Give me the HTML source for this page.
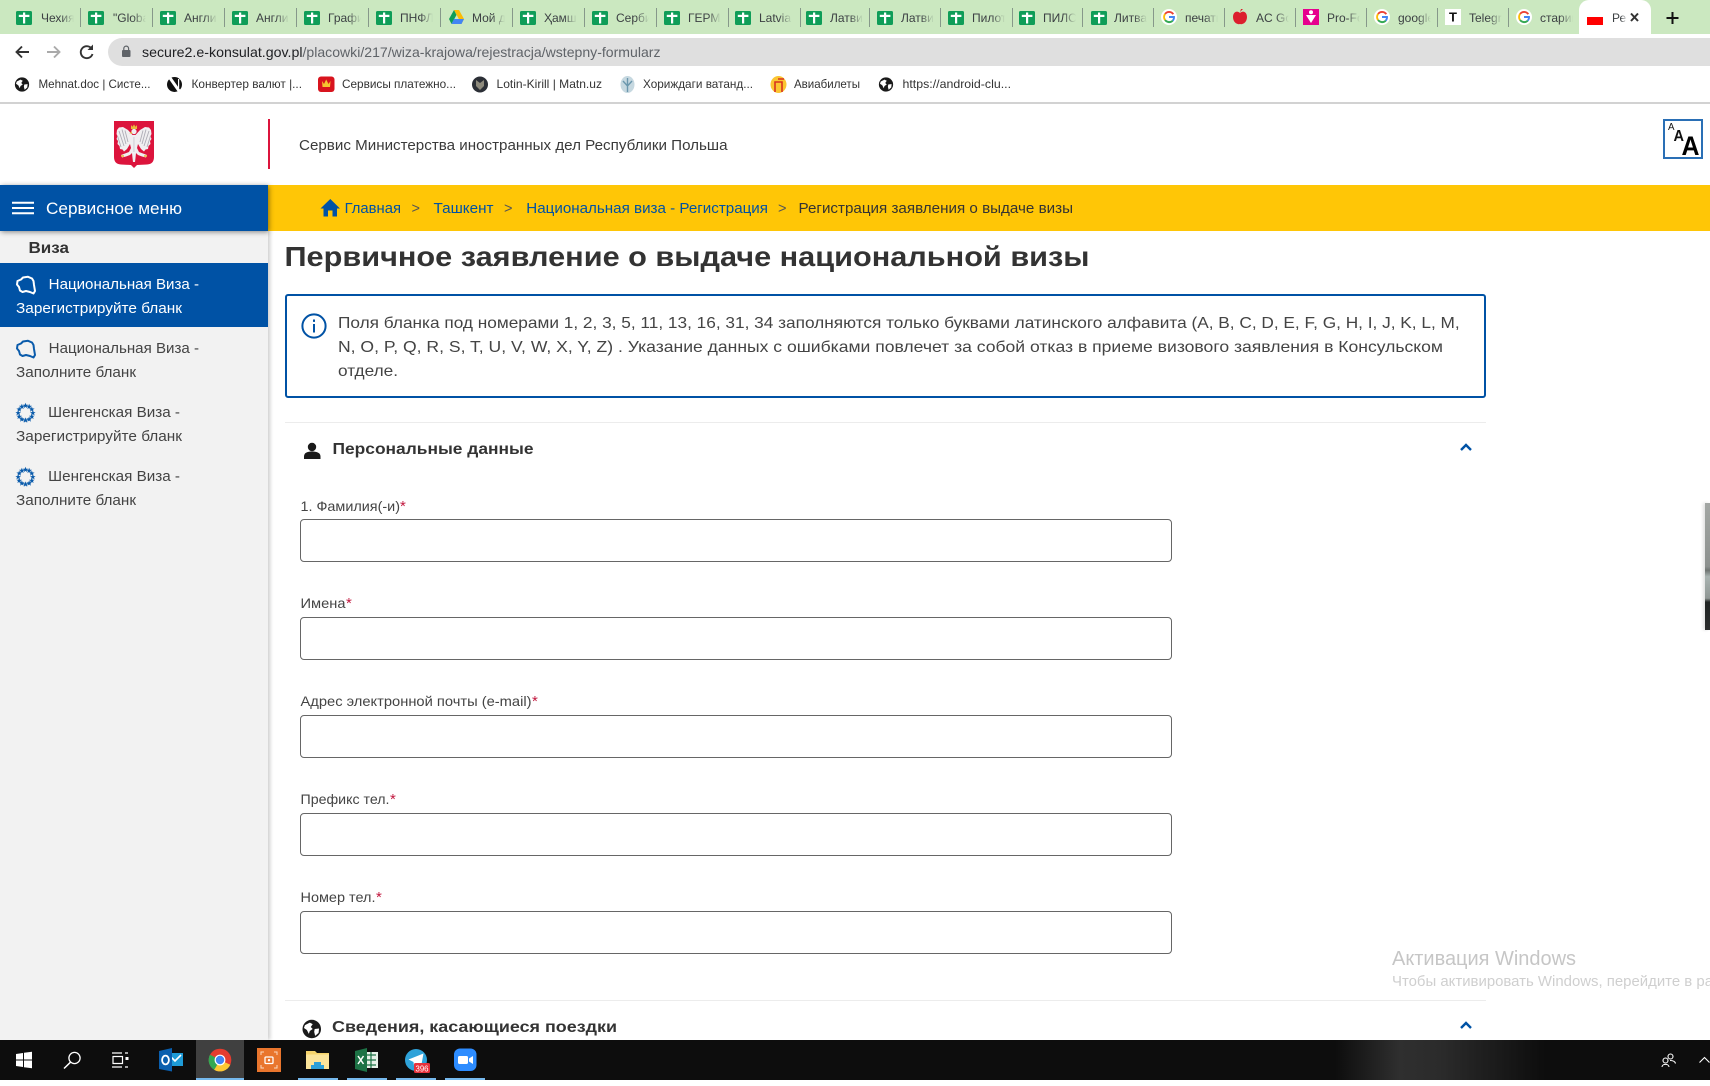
<!DOCTYPE html>
<html lang="ru"><head><meta charset="utf-8"><title>Регистрация заявления</title>
<style>
html,body{margin:0;padding:0;background:#fff}
body{position:relative;width:1710px;height:1086px;overflow:hidden;font-family:"Liberation Sans","Noto Sans CJK SC",sans-serif}
.b{position:absolute}
.tt{position:absolute;top:10px;height:16px;line-height:16px;width:33px;font-size:12px;color:#3c4043;white-space:nowrap;overflow:hidden;-webkit-mask-image:linear-gradient(to right,#000 60%,transparent);mask-image:linear-gradient(to right,#000 60%,transparent)}
.sp{position:absolute;top:8px;width:1px;height:19px;background:#86988a}
input{position:absolute;left:300px;width:872px;height:43px;box-sizing:border-box;border:1px solid #666;border-radius:4px;background:#fff;padding:0;margin:0;outline:0}
svg{position:absolute;left:0;top:0}
svg text{font-family:"Liberation Sans","Noto Sans CJK SC",sans-serif}
</style></head><body>

<div class="b" style="left:0;top:0;width:1710px;height:34px;background:#cbe8c0"></div>
<div class="b" style="left:1579px;top:0;width:72px;height:38px;background:#fff;border-radius:10px 10px 0 0"></div>
<div class="b" style="left:108px;top:38px;width:1602px;height:28px;background:#dfdfdf;border-radius:14px 0 0 14px"></div>
<div class="b" style="left:0;top:102px;width:1710px;height:2px;background:#d2d2d2"></div>

<!-- tab seps -->
<div class="sp" style="left:80px"></div><div class="sp" style="left:152px"></div><div class="sp" style="left:224px"></div><div class="sp" style="left:296px"></div><div class="sp" style="left:368px"></div><div class="sp" style="left:440px"></div><div class="sp" style="left:512px"></div><div class="sp" style="left:584px"></div><div class="sp" style="left:656px"></div><div class="sp" style="left:728px"></div><div class="sp" style="left:800px"></div><div class="sp" style="left:869px"></div><div class="sp" style="left:940px"></div><div class="sp" style="left:1012px"></div><div class="sp" style="left:1082px"></div><div class="sp" style="left:1153px"></div><div class="sp" style="left:1224px"></div><div class="sp" style="left:1295px"></div><div class="sp" style="left:1366px"></div><div class="sp" style="left:1437px"></div><div class="sp" style="left:1508px"></div>

<!-- tab titles -->
<div class="tt" style="left:41px">Чехия</div>
<div class="tt" style="left:113px">"Global</div>
<div class="tt" style="left:184px">Англия</div>
<div class="tt" style="left:256px">Англия</div>
<div class="tt" style="left:328px">График</div>
<div class="tt" style="left:400px">ПНФЛ</div>
<div class="tt" style="left:472px">Мой диск</div>
<div class="tt" style="left:544px">Ҳамша</div>
<div class="tt" style="left:616px">Сербия</div>
<div class="tt" style="left:688px">ГЕРМА</div>
<div class="tt" style="left:759px">Latvia</div>
<div class="tt" style="left:830px">Латвия</div>
<div class="tt" style="left:901px">Латвия</div>
<div class="tt" style="left:972px">Пилот</div>
<div class="tt" style="left:1043px">ПИЛС</div>
<div class="tt" style="left:1114px">Литва</div>
<div class="tt" style="left:1185px">печать</div>
<div class="tt" style="left:1256px">AC Go</div>
<div class="tt" style="left:1327px">Pro-Fo</div>
<div class="tt" style="left:1398px">google</div>
<div class="tt" style="left:1469px">Telegra</div>
<div class="tt" style="left:1540px">старин</div>
<div class="tt" style="left:1612px;width:15px">Рег</div>

<!-- sidebar / bars -->
<div class="b" style="left:0;top:231px;width:268px;height:809px;background:#f2f2f2;box-shadow:2px 0 4px rgba(0,0,0,.2)"></div>
<div class="b" style="left:268px;top:185px;width:1442px;height:46px;background:#ffc606"></div>
<div class="b" style="left:0;top:185px;width:268px;height:46px;background:#0052a5;box-shadow:1px 1px 5px rgba(0,0,0,.45)"></div>
<div class="b" style="left:0;top:263px;width:268px;height:64px;background:#0052a5"></div>
<div class="b" style="left:268px;top:119px;width:2px;height:50px;background:#dc143c"></div>

<!-- info box -->
<div class="b" style="left:284.5px;top:294px;width:1201.5px;height:104px;box-sizing:border-box;border:2px solid #0052a5;border-radius:3px"></div>
<div class="b" style="left:285px;top:422px;width:1201px;height:1px;background:#ececec"></div>
<div class="b" style="left:285px;top:1000px;width:1201px;height:1px;background:#ececec"></div>

<input style="top:519px" aria-label="Фамилия"><input style="top:617px" aria-label="Имена"><input style="top:715px" aria-label="Email"><input style="top:813px" aria-label="Префикс"><input style="top:911px" aria-label="Номер">

<!-- scrollbar sliver -->
<div class="b" style="left:1705px;top:503px;width:5px;height:127px;background:linear-gradient(#a3a7a4 0,#8c908e 50%,#6f7472 53%,#a9b3b1 58%,#8f9694 75%,#1f2322 78%,#2a2c2c 100%);box-shadow:-2px 0 3px rgba(0,0,0,.12)"></div>

<!-- taskbar -->
<div class="b" style="left:0;top:1040px;width:1710px;height:40px;background:linear-gradient(to right,#0d0d0d 0,#0d0d0d 1335px,#2f2f2f 1400px,#2b2b2b 1440px,#0d0d0d 1545px,#0d0d0d 100%)"></div>
<div class="b" style="left:196px;top:1040px;width:48px;height:40px;background:#404040"></div>
<div class="b" style="left:196px;top:1078px;width:48px;height:2px;background:#76b9ed"></div>
<div class="b" style="left:298px;top:1078px;width:40px;height:2px;background:#76b9ed"></div>
<div class="b" style="left:347px;top:1078px;width:40px;height:2px;background:#76b9ed"></div>
<div class="b" style="left:396px;top:1078px;width:40px;height:2px;background:#76b9ed"></div>
<div class="b" style="left:445px;top:1078px;width:40px;height:2px;background:#76b9ed"></div>

<svg width="1710" height="1086" viewBox="0 0 1710 1086" xmlns="http://www.w3.org/2000/svg">
<defs>
<symbol id="sheet" viewBox="0 0 16 14" overflow="visible"><rect width="16" height="14" rx="1.5" fill="#0f9d58"/><rect x="7" y="1.5" width="2.2" height="11" fill="#fff"/><rect x="2.8" y="3.8" width="10.6" height="2.2" fill="#fff"/></symbol>
<symbol id="goog" viewBox="0 0 16 16" overflow="visible"><circle cx="8" cy="8" r="8" fill="#fff"/><path d="M12.3 5.2A5 5 0 0 0 4.1 4.9" fill="none" stroke="#ea4335" stroke-width="1.9"/><path d="M4.1 4.9A5 5 0 0 0 4.1 11" fill="none" stroke="#fbbc05" stroke-width="1.9"/><path d="M4.1 11A5 5 0 0 0 11.8 11.6" fill="none" stroke="#34a853" stroke-width="1.9"/><path d="M11.8 11.6A5 5 0 0 0 13 8H8" fill="none" stroke="#4285f4" stroke-width="1.9"/></symbol>
<symbol id="globe" viewBox="0 0 20 20" overflow="visible"><circle cx="10" cy="10" r="9.5" fill="#1a1a1a"/><path d="M3 6 L8 3.5 L11 5 L9 8 L11 10 L8 12 L7 15 L5 11 L2 9Z M13 10 L17.5 9.5 L17 14 L13.5 17 L12.5 13Z" fill="#fff"/></symbol>
<symbol id="pol" viewBox="0 0 20 19" overflow="visible"><path d="M1.5 5 L5 3.5 L7 1.5 L12 .8 L16 2.5 L17.5 5 L18 9 L18.5 12 L19 15 L17.5 17.5 L14 16 L10 15 L6.5 16 L4 14.5 L3 11 L1 8.5Z" fill="none" stroke="currentColor" stroke-width="2" stroke-linejoin="round"/></symbol>
<polygon id="s" points="0,-2.9 .8,-.9 2.8,-.9 1.2,.4 1.8,2.4 0,1.2 -1.8,2.4 -1.2,.4 -2.8,-.9 -.8,-.9" fill="#0a5bab"/>
<g id="eu"><use href="#s" transform="translate(0,-7.3)"/><use href="#s" transform="translate(3.65,-6.3)"/><use href="#s" transform="translate(6.3,-3.65)"/><use href="#s" transform="translate(7.3,0)"/><use href="#s" transform="translate(6.3,3.65)"/><use href="#s" transform="translate(3.65,6.3)"/><use href="#s" transform="translate(0,7.3)"/><use href="#s" transform="translate(-3.65,6.3)"/><use href="#s" transform="translate(-6.3,3.65)"/><use href="#s" transform="translate(-7.3,0)"/><use href="#s" transform="translate(-6.3,-3.65)"/><use href="#s" transform="translate(-3.65,-6.3)"/></g>
<g id="halfeagle"><path d="M132.5 135 L128 130 L123 127 L119 127.5 L117 130 L116.5 134 L117.5 136 L116.5 139 L118 141 L117.5 144 L119.5 146 L120 149 L122.5 149.5 L124 151.5 L127 149 L130 144 L131 148 L129 152 L125 153.5 L121 155 L122 157.5 L126 156.5 L130 155 L132 153 L132.5 158 L133 162 L134 162 L134 135Z" fill="#f0eff1"/><path d="M119 131 L124 146 M122 129.5 L126 144 M125 130.5 L128 142 M117.5 136 L121 147" stroke="#aeadb6" stroke-width=".9" fill="none"/><path d="M134 137 V152" stroke="#c9c8d0" stroke-width=".8"/></g>
</defs>

<!-- tab icons -->
<use href="#sheet" x="16" y="11" width="16" height="14"/><use href="#sheet" x="88" y="11" width="16" height="14"/><use href="#sheet" x="160" y="11" width="16" height="14"/><use href="#sheet" x="232" y="11" width="16" height="14"/><use href="#sheet" x="304" y="11" width="16" height="14"/><use href="#sheet" x="376" y="11" width="16" height="14"/>
<g transform="translate(449,10)"><path d="M5 0 L10 0 L15 9 L12.5 14 Z" fill="#fbbc05"/><path d="M5 0 L0 9 L2.5 14 L7.5 5Z" fill="#0f9d58"/><path d="M2.5 14 L12.5 14 L15 9 L5 9Z" fill="#4285f4"/></g>
<use href="#sheet" x="520" y="11" width="16" height="14"/><use href="#sheet" x="592" y="11" width="16" height="14"/><use href="#sheet" x="664" y="11" width="16" height="14"/><use href="#sheet" x="735" y="11" width="16" height="14"/><use href="#sheet" x="806" y="11" width="16" height="14"/><use href="#sheet" x="877" y="11" width="16" height="14"/><use href="#sheet" x="948" y="11" width="16" height="14"/><use href="#sheet" x="1019" y="11" width="16" height="14"/><use href="#sheet" x="1091" y="11" width="16" height="14"/>
<use href="#goog" x="1161" y="9" width="16" height="16"/>
<path d="M1240 13 C1237 10 1233 12 1233 17 C1233 22 1237 25 1240 24 C1243 25 1247 22 1247 17 C1247 12 1243 10 1240 13Z M1240 12 L1241 9 L1243 9" fill="#dc1f2e"/>
<rect x="1303" y="9" width="16" height="16" fill="#e6008e"/><path d="M1306 15 H1316 L1311 23Z" fill="#fff"/><circle cx="1311" cy="12.3" r="2" fill="#fff"/>
<use href="#goog" x="1374" y="9" width="16" height="16"/>
<rect x="1445" y="9" width="16" height="16" fill="#fff"/><text x="1449" y="21.5" font-size="13" font-weight="700" fill="#111">T</text>
<use href="#goog" x="1516" y="9" width="16" height="16"/>
<rect x="1587" y="17" width="16" height="8" fill="#f00"/>
<path d="M1631 13.5 L1638 21 M1638 13.5 L1631 21" stroke="#333" stroke-width="2"/>
<path d="M1672.5 12 V24 M1666.5 18 H1678.5" stroke="#111" stroke-width="2"/>

<!-- toolbar -->
<path d="M29 52 H16.5 M22 46.5 L16.5 52 L22 57.5" fill="none" stroke="#333" stroke-width="1.9"/>
<path d="M47 52 H59.5 M54 46.5 L59.5 52 L54 57.5" fill="none" stroke="#aaa" stroke-width="1.9"/>
<path d="M91.5 48.5 A6 6 0 1 0 92.5 54" fill="none" stroke="#333" stroke-width="1.9"/><path d="M87.5 50 H93 V44.5Z" fill="#333"/>
<rect x="122" y="50" width="8.5" height="7" rx="1" fill="#5f6368"/><path d="M123.8 50 V48.5 A2.4 2.4 0 0 1 128.6 48.5 V50" fill="none" stroke="#5f6368" stroke-width="1.2"/>
<text x="142" y="57" font-size="14" fill="#202124" textLength="160.5" lengthAdjust="spacingAndGlyphs">secure2.e-konsulat.gov.pl</text>
<text x="302.5" y="57" font-size="14" fill="#5f6368" textLength="358" lengthAdjust="spacingAndGlyphs">/placowki/217/wiza-krajowa/rejestracja/wstepny-formularz</text>

<!-- bookmarks -->
<use href="#globe" x="14.5" y="77" width="15" height="15"/>
<text x="38.5" y="88" font-size="12" fill="#333" textLength="112" lengthAdjust="spacingAndGlyphs">Mehnat.doc | Систе...</text>
<circle cx="174.5" cy="84.5" r="7.5" fill="#111"/><path d="M170 78 L179.5 91.5" stroke="#fff" stroke-width="3" fill="none"/><path d="M178.6 79 V88" stroke="#fff" stroke-width="1.2"/>
<text x="191.5" y="88" font-size="12" fill="#333" textLength="110.5" lengthAdjust="spacingAndGlyphs">Конвертер валют |...</text>
<rect x="318" y="76.5" width="16.5" height="15.5" rx="3" fill="#d8141e"/><path d="M322 81 L324 84 L326.2 79.5 L328.5 84 L330.5 81 L330 87 H322.5Z" fill="#f6c530"/>
<text x="342" y="88" font-size="12" fill="#333" textLength="114" lengthAdjust="spacingAndGlyphs">Сервисы платежно...</text>
<circle cx="480" cy="84.5" r="8" fill="#2b2f36"/><path d="M476 80 L480 83 L484 80 L484 86 L480 90 L476 86Z" fill="#8d8a7c"/>
<text x="496.5" y="88" font-size="12" fill="#333" textLength="105.5" lengthAdjust="spacingAndGlyphs">Lotin-Kirill | Matn.uz</text>
<ellipse cx="627.5" cy="84.5" rx="7" ry="8.5" fill="#c6d8e0"/><path d="M627.5 78 V92 M623 81 L627.5 86 L632 81" stroke="#6b97ad" stroke-width="1.4" fill="none"/>
<text x="643" y="88" font-size="12" fill="#333" textLength="110" lengthAdjust="spacingAndGlyphs">Хориждаги ватанд...</text>
<ellipse cx="778.5" cy="84.5" rx="8" ry="8.5" fill="#fbc531"/><path d="M775 92 V82 H782 V92 M778 79 H784" stroke="#d8321f" stroke-width="1.6" fill="none"/>
<text x="794" y="88" font-size="12" fill="#333" textLength="66" lengthAdjust="spacingAndGlyphs">Авиабилеты</text>
<use href="#globe" x="878.5" y="77" width="15" height="15"/>
<text x="902.5" y="88" font-size="12" fill="#333" textLength="108.5" lengthAdjust="spacingAndGlyphs">https://android-clu...</text>

<!-- emblem -->
<path d="M114 121 H154 V157 Q154 164 147 164.5 L137 165 L134 168 L131 165 L121 164.5 Q114 164 114 157Z" fill="#dc143c"/>
<use href="#halfeagle"/><use href="#halfeagle" transform="translate(268,0) scale(-1,1)"/>
<circle cx="134" cy="131.5" r="2.6" fill="#f0eff1"/><path d="M131 129 V125 L132.5 126.8 L134 124.5 L135.5 126.8 L137 125 V129Z" fill="#e8b83a"/><path d="M131.6 131.5 L129.3 133.2 L132 133.8Z" fill="#e8b83a"/>
<path d="M121 156 h3 M144 156 h3" stroke="#e8b83a" stroke-width="1.4"/>

<text x="299" y="150" font-size="14.5" fill="#3a3a3a" textLength="428.5" lengthAdjust="spacingAndGlyphs">Сервис Министерства иностранных дел Республики Польша</text>

<!-- AA -->
<rect x="1664" y="120" width="38" height="38" fill="#fff" stroke="#2a6fb5" stroke-width="2"/>
<text x="1668" y="130" font-size="10" fill="#111" textLength="6.5" lengthAdjust="spacingAndGlyphs">A</text>
<text x="1673.5" y="141" font-size="16" font-weight="700" fill="#111" textLength="10.5" lengthAdjust="spacingAndGlyphs">A</text>
<text x="1681.5" y="155" font-size="26.5" font-weight="700" fill="#000" textLength="18" lengthAdjust="spacingAndGlyphs">A</text>

<!-- service menu -->
<path d="M12 202.7 H34 M12 208 H34 M12 213.3 H34" stroke="#fff" stroke-width="2"/>
<text x="46" y="214" font-size="16.5" fill="#fff" textLength="136" lengthAdjust="spacingAndGlyphs">Сервисное меню</text>
<text x="28.5" y="253" font-size="16" font-weight="700" fill="#333" textLength="40.5" lengthAdjust="spacingAndGlyphs">Виза</text>

<use href="#pol" x="16" y="276" width="20" height="19" color="#fff"/>
<text x="48.7" y="289" font-size="14.5" fill="#fff" textLength="150.3" lengthAdjust="spacingAndGlyphs">Национальная Виза -</text>
<text x="16" y="313" font-size="14.5" fill="#fff" textLength="166" lengthAdjust="spacingAndGlyphs">Зарегистрируйте бланк</text>
<use href="#pol" x="16" y="340" width="20" height="19" color="#0a5bab"/>
<text x="48.7" y="353" font-size="14.5" fill="#444" textLength="150.3" lengthAdjust="spacingAndGlyphs">Национальная Виза -</text>
<text x="16" y="377" font-size="14.5" fill="#444" textLength="120" lengthAdjust="spacingAndGlyphs">Заполните бланк</text>
<use href="#eu" x="25.5" y="413"/>
<text x="48.2" y="417" font-size="14.5" fill="#444" textLength="131.8" lengthAdjust="spacingAndGlyphs">Шенгенская Виза -</text>
<text x="16" y="441" font-size="14.5" fill="#444" textLength="166" lengthAdjust="spacingAndGlyphs">Зарегистрируйте бланк</text>
<use href="#eu" x="25.5" y="477"/>
<text x="48.2" y="481" font-size="14.5" fill="#444" textLength="131.8" lengthAdjust="spacingAndGlyphs">Шенгенская Виза -</text>
<text x="16" y="505" font-size="14.5" fill="#444" textLength="120" lengthAdjust="spacingAndGlyphs">Заполните бланк</text>

<!-- breadcrumb -->
<path d="M330.3 199 L320.5 208.5 H323.5 V216.5 H328 V210.5 H332.5 V216.5 H337 V208.5 H340 Z" fill="#0052a5"/>
<text x="344.6" y="213" font-size="14.5" fill="#0052a5" textLength="56.4" lengthAdjust="spacingAndGlyphs">Главная</text>
<text x="411.5" y="213" font-size="14.5" fill="#555">&gt;</text>
<text x="433.5" y="213" font-size="14.5" fill="#0052a5" textLength="60" lengthAdjust="spacingAndGlyphs">Ташкент</text>
<text x="504" y="213" font-size="14.5" fill="#555">&gt;</text>
<text x="526.3" y="213" font-size="14.5" fill="#0052a5" textLength="241.7" lengthAdjust="spacingAndGlyphs">Национальная виза - Регистрация</text>
<text x="778" y="213" font-size="14.5" fill="#555">&gt;</text>
<text x="798.5" y="213" font-size="14.5" fill="#333" textLength="274.5" lengthAdjust="spacingAndGlyphs">Регистрация заявления о выдаче визы</text>

<!-- title -->
<text x="284.5" y="266" font-size="27.5" font-weight="700" fill="#333" textLength="805" lengthAdjust="spacingAndGlyphs">Первичное заявление о выдаче национальной визы</text>

<!-- info -->
<circle cx="314" cy="326" r="11.6" fill="none" stroke="#0052a5" stroke-width="2"/><rect x="313" y="324" width="2" height="8.5" fill="#0052a5"/><rect x="313" y="319.5" width="2" height="2.4" fill="#0052a5"/>
<text x="338" y="328" font-size="16" fill="#444" textLength="1121.7" lengthAdjust="spacingAndGlyphs">Поля бланка под номерами 1, 2, 3, 5, 11, 13, 16, 31, 34 заполняются только буквами латинского алфавита (A, B, C, D, E, F, G, H, I, J, K, L, M,</text>
<text x="338" y="352" font-size="16" fill="#444" textLength="1105" lengthAdjust="spacingAndGlyphs">N, O, P, Q, R, S, T, U, V, W, X, Y, Z) . Указание данных с ошибками повлечет за собой отказ в приеме визового заявления в Консульском</text>
<text x="338" y="376" font-size="16" fill="#444" textLength="60" lengthAdjust="spacingAndGlyphs">отделе.</text>

<!-- section 1 -->
<circle cx="312" cy="447" r="4.2" fill="#1a1a1a"/><path d="M304 459 V456.5 C304 452.5 308 451.5 312 451.5 C316 451.5 320.5 452.5 320.5 456.5 V459Z" fill="#1a1a1a"/>
<text x="332.5" y="454" font-size="16" font-weight="700" fill="#333" textLength="201" lengthAdjust="spacingAndGlyphs">Персональные данные</text>
<path d="M1461 450 L1466 445 L1471 450" fill="none" stroke="#0052a5" stroke-width="2.4"/>

<!-- labels -->
<text x="300.5" y="511" font-size="14" fill="#444" textLength="99.5" lengthAdjust="spacingAndGlyphs">1. Фамилия(-и)</text><text x="400" y="511" font-size="15" fill="#c2183f">*</text>
<text x="300.5" y="608" font-size="14" fill="#444" textLength="45" lengthAdjust="spacingAndGlyphs">Имена</text><text x="346" y="608" font-size="15" fill="#c2183f">*</text>
<text x="300.5" y="706" font-size="14" fill="#444" textLength="231" lengthAdjust="spacingAndGlyphs">Адрес электронной почты (e-mail)</text><text x="532" y="706" font-size="15" fill="#c2183f">*</text>
<text x="300.5" y="804" font-size="14" fill="#444" textLength="89" lengthAdjust="spacingAndGlyphs">Префикс тел.</text><text x="390" y="804" font-size="15" fill="#c2183f">*</text>
<text x="300.5" y="902" font-size="14" fill="#444" textLength="75" lengthAdjust="spacingAndGlyphs">Номер тел.</text><text x="376" y="902" font-size="15" fill="#c2183f">*</text>

<!-- section 2 -->
<use href="#globe" x="302" y="1019" width="19.5" height="20"/>
<text x="332" y="1032" font-size="16" font-weight="700" fill="#333" textLength="285" lengthAdjust="spacingAndGlyphs">Сведения, касающиеся поездки</text>
<path d="M1461 1028 L1466 1023 L1471 1028" fill="none" stroke="#0052a5" stroke-width="2.4"/>

<!-- activation -->
<text x="1392" y="965" font-size="20" fill="#c6c6c6" textLength="184" lengthAdjust="spacingAndGlyphs">Активация Windows</text>
<text x="1392" y="986" font-size="15" fill="#cfcfcf" textLength="321" lengthAdjust="spacingAndGlyphs">Чтобы активировать Windows, перейдите в ра</text>

<!-- taskbar icons -->
<path d="M16 1054 L23 1053 V1059.5 H16Z M24 1052.8 L32 1051.7 V1059.5 H24Z M16 1060.5 H23 V1067 L16 1066Z M24 1060.5 H32 V1068.3 L24 1067.2Z" fill="#fff"/>
<circle cx="74.5" cy="1058" r="5.6" fill="none" stroke="#fff" stroke-width="1.3"/><path d="M70.5 1062.2 L64 1068.5" stroke="#fff" stroke-width="1.5"/>
<path d="M112 1053 H122 M112 1067 H122 M113 1056.5 H122.5 V1063.5 H113Z M125 1053 H128 M125 1067 H128" stroke="#fff" stroke-width="1.2" fill="none"/><rect x="125.5" y="1057" width="3" height="3" fill="#fff"/>
<rect x="167" y="1053" width="16" height="13" fill="#1e9bd7"/><path d="M170 1056 L175 1061 L181 1055" stroke="#fff" stroke-width="1.6" fill="none"/><path d="M159 1051 L172 1048 V1071.5 L159 1069Z" fill="#0a5fae"/><ellipse cx="165.5" cy="1060" rx="3.4" ry="4.4" fill="none" stroke="#fff" stroke-width="1.8"/>
<circle cx="220" cy="1060" r="11.3" fill="#e53c2f"/><path d="M220 1060 L230.3 1064.8 A11.3 11.3 0 0 1 214 1069.7Z" fill="#fcc934"/><path d="M220 1060 L214.2 1069.8 A11.3 11.3 0 0 1 210 1054.6Z" fill="#34a853"/><circle cx="220" cy="1060" r="5.4" fill="#fff"/><circle cx="220" cy="1060" r="4.2" fill="#4285f4"/>
<rect x="257" y="1048" width="24" height="24" fill="#e9752d"/><rect x="265" y="1057" width="8" height="6.5" rx="1" fill="none" stroke="#fff" stroke-width="1.3"/><circle cx="269" cy="1060.2" r="1.2" fill="#fff"/><path d="M261 1055 V1052 H264 M274 1052 H277 V1055 M261 1065 V1068 H264 M274 1068 H277 V1065" stroke="#fbd9c0" stroke-width="1" fill="none"/>
<path d="M306 1051 H315 L317 1053 H329 V1069 H306Z" fill="#f5d36b"/><rect x="306" y="1054.5" width="23" height="14.5" fill="#fbe49a"/><path d="M311 1069 V1065 H314 V1062 H321 V1065 H324 V1069Z" fill="#2b9fd9"/>
<rect x="362" y="1052" width="16" height="16" fill="#e7f0e8"/><path d="M366 1055 H376 M366 1060 H376 M366 1065 H376 M371 1052 V1068" stroke="#1d7245" stroke-width="1.2"/><path d="M355 1051 L367 1048 V1072 L355 1069Z" fill="#1d7245"/><path d="M358 1056 L363.5 1064 M363.5 1056 L358 1064" stroke="#fff" stroke-width="1.5"/>
<circle cx="416" cy="1060" r="11" fill="#2ea2d9"/><path d="M408.5 1059.5 L423.5 1053.5 L421 1067 L416.5 1063.5 L414 1066 L413.5 1062Z" fill="#fff"/>
<rect x="414" y="1063" width="16" height="10" rx="1.5" fill="#e8323c"/><text x="415.5" y="1071.5" font-size="8.5" fill="#fff" textLength="13" lengthAdjust="spacingAndGlyphs">396</text>
<rect x="454" y="1048.5" width="22.5" height="22.5" rx="6" fill="#2d8cff"/><rect x="458" y="1056" width="10" height="8" rx="1.6" fill="#fff"/><path d="M469 1058.5 L473 1056 V1064 L469 1061.5Z" fill="#fff"/>
<circle cx="1670.5" cy="1056.5" r="2.5" fill="none" stroke="#fff" stroke-width="1.1"/><circle cx="1665.5" cy="1060.5" r="2.5" fill="none" stroke="#fff" stroke-width="1.1"/><path d="M1662 1067 C1662 1063.5 1669 1063.5 1669 1067 M1670 1060.5 C1672 1060.5 1675 1061 1675.5 1063.5" fill="none" stroke="#fff" stroke-width="1.1"/>
<path d="M1699.5 1062.5 L1704.5 1057.5 L1709.5 1062.5" fill="none" stroke="#fff" stroke-width="1.1"/>
</svg>
</body></html>
